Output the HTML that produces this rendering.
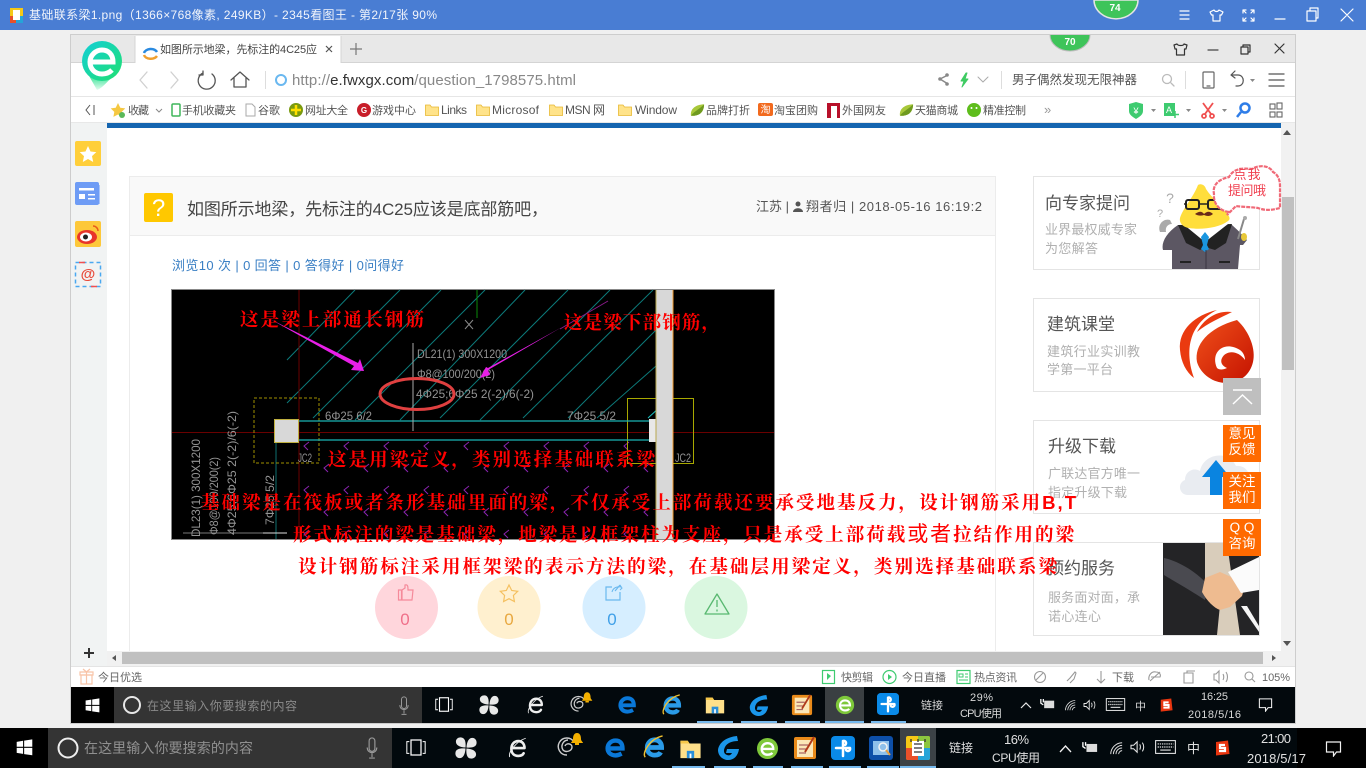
<!DOCTYPE html>
<html lang="zh"><head><meta charset="utf-8"><title>基础联系梁</title>
<style>
html,body{margin:0;padding:0;width:1366px;height:768px;overflow:hidden;background:#f0f0f0}
svg{display:block;font-family:"Liberation Sans","Noto Sans CJK SC",sans-serif;filter:blur(.3px)}
.r{font-family:"Liberation Serif","Noto Serif CJK SC",serif;fill:#f00;font-weight:700;font-size:18.5px}
.cad{fill:#949494;font-size:12px;font-family:"Liberation Sans",sans-serif}
.n{fill:none;stroke-linecap:round;stroke-linejoin:round}
.bk{fill:#555;font-size:11px}.bl{fill:#555;font-size:12px}
</style></head><body>
<svg width="1366" height="768" viewBox="0 0 1366 768" xmlns="http://www.w3.org/2000/svg">
<defs>
<linearGradient id="eg" x1="0" y1="0" x2="1" y2="1"><stop offset="0" stop-color="#12cfd8"/><stop offset="1" stop-color="#20e070"/></linearGradient>
<linearGradient id="tl" x1="0" y1="0" x2="0" y2="1"><stop offset="0" stop-color="#20e08a"/><stop offset="1" stop-color="#e4fcef"/></linearGradient>
<linearGradient id="rd" x1="0" y1="0" x2="1" y2="1"><stop offset="0" stop-color="#f0501a"/><stop offset="1" stop-color="#c41200"/></linearGradient>
<pattern id="chev" patternUnits="userSpaceOnUse" x="300" y="440" width="40" height="44">
<path d="M9 2L4 6L8 10M29 24L24 28L28 32" fill="none" stroke="#8a22b0" stroke-width="1"/></pattern>
<symbol id="win" viewBox="0 0 24 24"><path fill="#fff" d="M1 4l9-1.500V11H1zM11.500 2.300L23 .5V11H11.500zM1 12.500h9V21l-9-1.500zM11.500 12.500H23V23l-11.500-1.700z"/></symbol>
<symbol id="fan" viewBox="0 0 24 24"><path fill="#e8e8e8" d="M11.500 11.500C5 11 1 9 1 5c0-3 3-5 6-4.500 4 .5 5 5 4.500 11zM12.500 11.500C13 5 15 1 19 1c3 0 5 3 4.500 6-.5 4-5 5-11 4.500zM12.500 12.500C19 13 23 15 23 19c0 3-3 5-6 4.500-4-.5-5-5-4.500-11zM11.500 12.500C11 19 9 23 5 23c-3 0-5-3-4.500-6 .5-4 5-5 11-4.500z"/></symbol>
<symbol id="ewhite" viewBox="0 0 24 24"><path class="n" stroke="#eee" stroke-width="3" d="M5 12h15c0-5-3-8-7-8-5 0-8 4-8 9 0 5 3 8 8 8 3 0 5-1 6-3"/><path class="n" stroke="#eee" stroke-width="1" d="M3 22C1 16 12 4 21 1"/></symbol>
<symbol id="swirl" viewBox="0 0 28 24"><path fill="none" stroke="#ccc" stroke-width="1.400" d="M10 22a8.500 8.500 0 1 1 7-13M11 7a6.500 6.500 0 0 0-5 10c3 3 9 1 9-3s-6-4-7-1"/><path fill="#f4b000" d="M20 0c3 0 4 3 4 6 0 2 2 3 2 4H14c0-1 2-2 2-4 0-3 1-6 4-6z"/><rect x="18" y="10" width="4" height="2" fill="#f4b000"/></symbol>
<symbol id="edge" viewBox="0 0 24 24"><path fill="none" stroke="#0a78d8" stroke-width="5" d="M4 13h16c0-6-3-9-8-9-5 0-9 4-9 9 0 5 4 8 9 8 3 0 5-1 7-2"/></symbol>
<symbol id="ie" viewBox="0 0 24 24"><path fill="none" stroke="#2a9be8" stroke-width="5" d="M6 13h15c0-5-3-8-7-8-5 0-8 4-8 8 0 5 3 8 8 8 3 0 5-1 6-3"/><path fill="none" stroke="#f2c230" stroke-width="1.500" d="M4 23C0 20 8 4 22 1"/></symbol>
<symbol id="fold" viewBox="0 0 24 24"><path fill="#ffe08a" d="M1 3h8l2 3h12v16H1z"/><path fill="#f7c84a" d="M1 3h8l2 3H1z"/><path fill="#2a8fd8" d="M8 14h8v8H8z"/><path fill="#fff" d="M11 17h2v5h-2z"/></symbol>
<symbol id="gi" viewBox="0 0 24 24"><path fill="#1a96ea" d="M21 0C11 1 3 6 2 14c0 6 5 10 10 10 6 0 10-4 11-11H11l-1 4h6c-1 2-3 3-5 2-3-1-4-4-2-8 2-4 7-6 13-6z"/></symbol>
<symbol id="note" viewBox="0 0 24 24"><rect x="1" y="1" width="22" height="22" rx="2" fill="#e88a1a"/><rect x="4" y="4" width="16" height="17" fill="#fbe7b8"/><path stroke="#a66" stroke-width="1.300" d="M6 9h9M6 13h8M6 17h7"/><path stroke="#b03a1a" stroke-width="2" d="M21 1L12 16"/></symbol>
<symbol id="gre" viewBox="0 0 24 24"><circle cx="12" cy="12" r="11" fill="#7ec83a"/><path fill="none" stroke="#fff" stroke-width="2.500" d="M6 12.500h12c0-4-2.500-6-6-6s-6 2.500-6 6 2.500 6 6 6c2 0 4-.5 5-2"/></symbol>
<symbol id="blu" viewBox="0 0 24 24"><rect x="0" y="0" width="24" height="24" rx="4" fill="#0a8ae8"/><path class="n" stroke="#fff" stroke-width="2.500" d="M12 5v15M5 12h14M12 5c3-1 4 3 2 4M19 12c1 3-3 4-4 2"/></symbol>
<symbol id="pho" viewBox="0 0 24 24"><rect width="24" height="24" rx="3" fill="#0d4fa8"/><rect x="4" y="5" width="16" height="14" fill="#8fc0ea"/><circle cx="14" cy="11" r="4" fill="none" stroke="#f3f3f3" stroke-width="1.500"/><path d="M17 14l4 5" stroke="#e8a040" stroke-width="2"/></symbol>
<symbol id="kt" viewBox="0 0 24 24"><rect width="24" height="24" rx="2" fill="#f5c816"/><path fill="#8cc63f" d="M12 0h10a2 2 0 0 1 2 2v10H12z"/><path fill="#e8502a" d="M0 12h12v12H2a2 2 0 0 1-2-2z"/><path fill="#25a4d8" d="M12 12h12v10a2 2 0 0 1-2 2H12z"/><rect x="6" y="5" width="12" height="15" fill="#fff"/><path stroke="#333" stroke-width="1.300" d="M8 8h8M8 12h8M8 16h8M5 3v3M19 3v3M12 3v3"/></symbol>
<symbol id="tview" viewBox="0 0 24 20"><rect x="6" y="1" width="12" height="18" fill="none" stroke="#fff" stroke-width="1.500"/><path fill="none" stroke="#fff" stroke-width="1.200" d="M4 3H1v14h3M20 3h3v14h-3"/></symbol>
<symbol id="mic" viewBox="0 0 12 24"><rect x="3" y="1" width="6" height="14" rx="3" fill="none" stroke="#999" stroke-width="1.200"/><path fill="none" stroke="#999" stroke-width="1.200" d="M1 11c0 7 10 7 10 0M6 17v4M3 22h6"/></symbol>
<symbol id="wifi" viewBox="0 0 16 16"><path fill="none" stroke="#ddd" stroke-width="1.100" d="M2 15C2 8 8 2 15 2M5 15c0-5 5-10 10-10M8 15c0-4 3-7 7-7M11 15c0-2 2-4 4-4"/></symbol>
<symbol id="spk" viewBox="0 0 18 16"><path fill="none" stroke="#e8e8e8" stroke-width="1.200" d="M1 6h3l4-4v12l-4-4H1zM11 5c1 2 1 4 0 6M14 3c2 3 2 7 0 10"/></symbol>
<symbol id="kbd" viewBox="0 0 24 16"><rect x=".7" y=".7" width="22.600" height="14.600" fill="none" stroke="#e8e8e8" stroke-width="1.200"/><path stroke="#e8e8e8" stroke-width="1.400" stroke-dasharray="1.500 1" d="M3 4.500h18M3 8h18"/><path stroke="#e8e8e8" stroke-width="1.300" d="M6 11.500h12"/></symbol>
<symbol id="bat" viewBox="0 0 18 14"><rect x="5" y="3" width="12" height="9" fill="#ddd"/><path stroke="#fff" stroke-width="1.500" fill="none" d="M1 1v5l3 2M4 1v4"/></symbol>
<symbol id="sg" viewBox="0 0 16 16"><path fill="#e8350f" d="M2 2l12-1.500L15.500 14 2 15.500z"/><path fill="none" stroke="#fff" stroke-width="2.200" d="M11 5H6v3h5v3H5"/></symbol>
<symbol id="not" viewBox="0 0 16 16"><path fill="none" stroke="#f2f2f2" stroke-width="1.200" d="M1 1h14v10h-4l-3 4v-4H1z"/></symbol>
<symbol id="fd" viewBox="0 0 14 12"><path fill="#ffe38a" stroke="#e8b832" stroke-width=".8" d="M.5 1H5l1.500 2h7v8.500H.5z"/></symbol>
<symbol id="leaf" viewBox="0 0 16 14"><path fill="#a8c83a" d="M1 13C0 6 6 1 15 1c0 8-5 13-14 12z"/><path fill="#6f9a20" d="M1 13C5 8 9 7 15 1c0 8-5 13-14 12z"/></symbol>
</defs>

<!-- outer title bar -->
<rect width="1366" height="30" fill="#497dd3"/>
<rect x="10" y="8" width="13" height="15" fill="#f5c816"/><rect x="10" y="16" width="6" height="7" fill="#e8502a"/><rect x="16" y="16" width="7" height="7" fill="#25a4d8"/><rect x="13" y="10" width="7" height="10" fill="#fff"/>
<text x="29" y="19" font-size="12" fill="#f2f5fb" textLength="408">基础联系梁1.png（1366×768像素, 249KB）- 2345看图王 - 第2/17张 90%</text>
<path d="M1094 0a21 18 0 0 0 44 0z" fill="#3ec45a" stroke="#e4e4e4" stroke-width="1.500"/>
<text x="1115" y="11" font-size="10" font-weight="700" fill="#fff" text-anchor="middle">74</text>
<g class="n" stroke="#fff" stroke-width="1.200">
<path d="M1180 11h9M1180 15h9M1180 19h9"/>
<path d="M1214 10l-4 2 1.500 3h1.500v6h7v-6h1.500l1.500-3-4-2c-1 2-4 2-5 0z"/>
<path d="M1243 10l3 3M1243 10h3M1243 10v3M1254 10l-3 3M1254 10h-3M1254 10v3M1243 21l3-3M1243 21h3M1243 21v-3M1254 21l-3-3M1254 21h-3M1254 21v-3"/>
<path d="M1275 19h10M1307 11h9v10h-9zM1310 11V8h8v10h-2M1341 9l12 12M1353 9l-12 12"/>
</g>

<!-- inner window -->
<rect x="70" y="34" width="1226" height="690" fill="#aaa" opacity=".5"/>
<rect x="71" y="35" width="1224" height="652" fill="#fff"/>
<rect x="71" y="35" width="1224" height="27" fill="#e8e8e8"/>
<rect x="71" y="62" width="1224" height="1" fill="#d4d4d4"/>
<rect x="135" y="36" width="206" height="27" fill="#fff"/>
<path d="M135 36v27M341 36v27" stroke="#d4d4d4"/>
<!-- logo -->
<path d="M88 74L97 90C103 88 108 80 116 74z" fill="url(#tl)"/>
<circle cx="102" cy="61" r="20" fill="url(#eg)"/>
<path d="M91 62h22c0-8-5-12-11-12s-12 5-12 12 5 12 12 12c4 0 7-1 10-4" fill="none" stroke="#fff" stroke-width="5"/>
<!-- tab -->
<path d="M144 53a7 5.500 0 0 1 13-1" fill="none" stroke="#2a8ae0" stroke-width="2.500"/><path d="M144 55a7 5 0 0 0 13 1" fill="none" stroke="#f0a030" stroke-width="2.500"/>
<text x="160" y="53" font-size="11" fill="#444" textLength="157">如图所示地梁，先标注的4C25应</text>
<path d="M326 46l6 6M332 46l-6 6" stroke="#555" stroke-width="1.200"/>
<path d="M356 43v12M350 49h12" stroke="#777" stroke-width="1.200"/>
<path d="M1070 35m-20 0a20 16 0 0 0 40 0z" fill="#3ec45a"/><path d="M1050 35a20 16 0 0 0 40 0" fill="none" stroke="#bbb"/>
<text x="1070" y="45" font-size="10" font-weight="700" fill="#fff" text-anchor="middle">70</text>
<g class="n" stroke="#333" stroke-width="1.200">
<path d="M1177 44l-3 1 1 4h1.500v6h8v-6h1.500l1-4-3-1c-.5 2-6 2-7 0z"/>
<path d="M1208 50h10" stroke="#444"/>
<path d="M1241 47h7v7h-7zM1243 47v-2h7v7h-2"/>
<path d="M1275 44l9 9M1284 44l-9 9"/>
</g>
<!-- nav row -->
<g class="n">
<path d="M147 72l-7 8 7 8M171 72l7 8-7 8" stroke="#d0d0d0" stroke-width="1.300"/>
<path d="M203 73a8.500 8.500 0 1 0 9 1M203 71v4h-4" stroke="#555" stroke-width="1.300"/>
<path d="M231 80l9-8 9 8M234 78v9h12v-9" stroke="#555" stroke-width="1.300"/>
</g>
<rect x="265" y="71" width="1" height="18" fill="#ddd"/>
<circle cx="281" cy="80" r="5" fill="none" stroke="#6ab8f0" stroke-width="2"/>
<text x="292" y="85" font-size="15" fill="#888" textLength="284"><tspan>http://</tspan><tspan fill="#333">e.fwxgx.com</tspan><tspan>/question_1798575.html</tspan></text>
<g class="n">
<path d="M948 75l-8 4 8 5" stroke="#888" stroke-width="1.500"/><circle cx="947" cy="75" r="1.800" fill="#888"/><circle cx="940" cy="79" r="1.800" fill="#888"/><circle cx="947" cy="84" r="1.800" fill="#888"/>
<path d="M966 73l-5 8h3l-2 6 6-8h-3l2-6z" fill="#3ecb62" stroke="#3ecb62"/>
<path d="M978 77l5 5 5-5" stroke="#aaa"/>
<circle cx="1167" cy="79" r="4.500" stroke="#bbb" stroke-width="1.300"/><path d="M1171 83l3 3" stroke="#bbb" stroke-width="1.300"/>
<rect x="1203" y="72" width="11" height="16" rx="1" stroke="#666" stroke-width="1.200"/><path d="M1207 86h3" stroke="#666" stroke-width="1.200"/>
<path d="M1235 71l-4 4 4 3M1231 75h7c7 0 7 11 0 11h-2" stroke="#555" stroke-width="1.200"/>
<path d="M1269 74h15M1269 80h15M1269 86h15" stroke="#555" stroke-width="1.300"/>
</g>
<rect x="1001" y="71" width="1" height="18" fill="#ddd"/><rect x="1185" y="71" width="1" height="18" fill="#ddd"/>
<text x="1012" y="84" font-size="12.500" fill="#555" textLength="125">男子偶然发现无限神器</text>
<path d="M1250 79h5l-2.500 3z" fill="#888"/>
<rect x="71" y="96" width="1224" height="1" fill="#e6e6e6"/>
<!-- bookmarks -->
<path d="M90 105l-4 5 4 5M94 105v10" fill="none" stroke="#555"/>
<path d="M118 103l2.300 4.700 5 .7-3.600 3.500.9 5-4.600-2.400-4.600 2.400.9-5-3.600-3.500 5-.7z" fill="#f5c842"/><circle cx="122" cy="115" r="3" fill="#5ab85a"/>
<text class="bk" x="128" y="114" textLength="21">收藏</text><path d="M156 109l3 3 3-3" fill="none" stroke="#888"/>
<rect x="172" y="104" width="8" height="12" rx="1" fill="none" stroke="#3eb55a" stroke-width="1.500"/>
<text class="bk" x="182" y="114" textLength="54">手机收藏夹</text>
<path d="M246 104h6l3 3v9h-9z" fill="#fff" stroke="#aaa"/>
<text class="bk" x="258" y="114" textLength="22">谷歌</text>
<circle cx="296" cy="110" r="7" fill="#7a9a10"/><path d="M296 105v10M291 110h10" stroke="#ffe000" stroke-width="2.500"/>
<text class="bk" x="305" y="114" textLength="43">网址大全</text>
<circle cx="364" cy="110" r="7" fill="#c81e2a"/><text x="364" y="113" font-size="8" font-weight="700" fill="#fff" text-anchor="middle">G</text>
<text class="bk" x="372" y="114" textLength="44">游戏中心</text>
<use href="#fd" x="425" y="104" width="14" height="12"/><text class="bl" x="441" y="114" textLength="26">Links</text>
<use href="#fd" x="476" y="104" width="14" height="12"/><text class="bl" x="492" y="114" textLength="47">Microsof</text>
<use href="#fd" x="549" y="104" width="14" height="12"/><text class="bl" x="565" y="114" textLength="40">MSN 网</text>
<use href="#fd" x="618" y="104" width="14" height="12"/><text class="bl" x="635" y="114" textLength="42">Window</text>
<use href="#leaf" x="690" y="103" width="15" height="14"/><text class="bk" x="706" y="114" textLength="44">品牌打折</text>
<rect x="758" y="103" width="15" height="13" rx="2" fill="#f26a1e"/><text x="765.500" y="113" font-size="10" fill="#fff" text-anchor="middle">淘</text>
<text class="bk" x="774" y="114" textLength="44">淘宝团购</text>
<path d="M827 103h13v15h-3v-12h-6v12h-4z" fill="#b8102a"/>
<text class="bk" x="842" y="114" textLength="44">外国网友</text>
<use href="#leaf" x="899" y="103" width="15" height="14"/><text class="bk" x="915" y="114" textLength="43">天猫商城</text>
<circle cx="974" cy="110" r="7" fill="#5ebd1c"/><circle cx="971.500" cy="108" r="1" fill="#fff"/><circle cx="976.500" cy="108" r="1" fill="#fff"/>
<text class="bk" x="983" y="114" textLength="43">精准控制</text>
<text x="1044" y="114" font-size="13" fill="#999">»</text>
<path d="M1129 104l7-2 7 2v7c0 4-4 6-7 8-3-2-7-4-7-8z" fill="#3ecb70"/><text x="1136" y="114" font-size="9" fill="#fff" text-anchor="middle">¥</text>
<rect x="1164" y="103" width="11" height="13" fill="#3ecb70"/><text x="1169" y="113" font-size="9" fill="#fff" text-anchor="middle">A</text><path d="M1175 111v7M1172 114.500h7" stroke="#3ecb70" stroke-width="1.500"/>
<g fill="none" stroke="#f05050" stroke-width="1.800"><path d="M1203 103l8 11M1213 103l-8 11"/><circle cx="1204" cy="116" r="2"/><circle cx="1212" cy="116" r="2"/></g>
<circle cx="1245" cy="108" r="4.500" fill="none" stroke="#2e7de8" stroke-width="2.500"/><path d="M1241 112l-4 5" stroke="#2e7de8" stroke-width="2.500"/>
<path d="M1151 109h5l-2.500 3zM1186 109h5l-2.500 3zM1222 109h5l-2.500 3z" fill="#888"/>
<g fill="none" stroke="#666" stroke-width="1.100"><rect x="1270" y="104" width="5" height="5"/><rect x="1277" y="103" width="5" height="6" /><rect x="1270" y="112" width="5" height="5"/><rect x="1277" y="112" width="5" height="5"/></g>
<rect x="71" y="122" width="1224" height="1" fill="#e8e8e8"/>

<!-- page -->
<rect x="71" y="123" width="36" height="543" fill="#f1f3f3"/>
<rect x="107" y="123" width="1174" height="5" fill="#1565b0"/>
<rect x="1281" y="123" width="14" height="528" fill="#f1f1f1"/>
<rect x="1282" y="197" width="12" height="173" fill="#c0c0c0"/>
<path d="M1283 641h8l-4 5z" fill="#555"/><path d="M1283 135h8l-4-5z" fill="#555"/>
<rect x="75" y="141" width="26" height="25" rx="2" fill="#ffcf3a"/>
<path d="M88 146l2.500 5.500 5.800.6-4.300 4 1.200 5.900-5.200-3-5.200 3 1.200-5.900-4.300-4 5.800-.6z" fill="#fff"/>
<rect x="96" y="185" width="4" height="19" fill="#a8c4fa"/><rect x="75" y="182" width="24" height="23" rx="2" fill="#6e9cf5"/><path d="M79 188h15v2.500H79zM79 194h6v5h-6zM88 194h7v1.500h-7zM88 198h7v1.500h-7z" fill="#fff"/>
<rect x="75" y="221" width="26" height="26" rx="2" fill="#fdc83a"/><ellipse cx="87" cy="237" rx="10" ry="7" fill="#e8352a"/><ellipse cx="86" cy="237" rx="6" ry="4.500" fill="#fff"/><circle cx="85.500" cy="237" r="2.500" fill="#222"/><path d="M93 226a5 5 0 0 1 5 5" fill="none" stroke="#e85a1a" stroke-width="1.500"/>
<rect x="75.500" y="262.500" width="25" height="24" fill="none" stroke="#4aa8f0" stroke-width="1.500" stroke-dasharray="4 3"/><path d="M79 262.500h6M91 286.500h6" stroke="#f05050" stroke-width="1.500"/><text x="88" y="279" font-size="15" font-weight="700" fill="#e84a3a" text-anchor="middle">@</text>

<!-- main card -->
<rect x="129.500" y="176.500" width="866" height="480" fill="#fff" stroke="#ececec"/>
<rect x="130" y="177" width="865" height="58" fill="#f9f9f9"/>
<rect x="130" y="235" width="865" height="1" fill="#ececec"/>
<rect x="144" y="193" width="29" height="29" rx="2" fill="#ffc800"/>
<text x="158.500" y="216" font-size="24" fill="#fff" text-anchor="middle">?</text>
<text x="187" y="215" font-size="17" fill="#444" textLength="361">如图所示地梁，先标注的4C25应该是底部筋吧，</text>
<text x="756" y="211" font-size="13" fill="#555">江苏 |</text>
<circle cx="798" cy="204" r="2.500" fill="#555"/><path d="M793 212c0-5 10-5 10 0z" fill="#555"/>
<text x="806" y="211" font-size="13" fill="#555" textLength="176">翔者归 | 2018-05-16 16:19:2</text>
<text x="172" y="270" font-size="13" fill="#3a7fc4" textLength="232">浏览10 次 | 0 回答 | 0 答得好 | 0问得好</text>

<!-- CAD picture -->
<rect x="171.500" y="289.500" width="603" height="250" fill="#000" stroke="#888"/>
<g stroke="#0c7a7a" stroke-width="1" fill="none">
<path d="M287 360L355 290M287 403L400 290M313 418L441 290M355 420L485 290M400 420L525 290M440 418L568 290M480 420L610 290M523 418L653 290M568 418L656 330M597 418L656 366"/>
</g>
<path d="M648 418L660 407" stroke="#1ac0c0"/>
<rect x="300" y="441" width="355" height="98" fill="url(#chev)"/>
<path d="M299 290v249" stroke="#6a0000"/><path d="M172 432.500h602" stroke="#6a0000"/>
<path d="M477 290v28" stroke="#0a8a0a"/>
<path d="M276 442v97" stroke="#0e7070"/>
<path d="M183 533h80" stroke="#777"/><path d="M263 533h24" stroke="#ddd"/>
<rect x="254" y="398" width="65" height="65" fill="none" stroke="#a09000" stroke-dasharray="3 2"/>
<rect x="627.500" y="398.500" width="66" height="65" fill="none" stroke="#a8a800"/>
<path d="M299 421h351M299 440h351" stroke="#19b5b5" stroke-width="1.200"/>
<rect x="274.500" y="419.500" width="24" height="23" fill="#d8d8d8" stroke="#c0b040"/>
<rect x="649" y="419" width="7" height="23" fill="#e8e8e8"/>
<rect x="656" y="290" width="17" height="249" fill="#d8d8d8"/>
<path d="M656 290v249" stroke="#b8a850"/><path d="M673 290v249" stroke="#f09a30"/>
<path d="M413 343v88" stroke="#aaa"/>
<path d="M465 320l8 9M473 320l-8 9" stroke="#888"/>
<text class="cad" x="417" y="358" textLength="90" lengthAdjust="spacingAndGlyphs">DL21(1) 300X1200</text>
<text class="cad" x="417" y="378" textLength="78" lengthAdjust="spacingAndGlyphs">Φ8@100/200(2)</text>
<text class="cad" x="416" y="398" textLength="118" lengthAdjust="spacingAndGlyphs">4Φ25;6Φ25 2(-2)/6(-2)</text>
<text class="cad" x="325" y="420" textLength="47" lengthAdjust="spacingAndGlyphs">6Φ25 6/2</text>
<text class="cad" x="567" y="420" textLength="49" lengthAdjust="spacingAndGlyphs">7Φ25 5/2</text>
<text class="cad" x="298" y="462" textLength="14" lengthAdjust="spacingAndGlyphs">JC2</text>
<text class="cad" x="675" y="462" textLength="16" lengthAdjust="spacingAndGlyphs">JC2</text>
<text class="cad" transform="translate(200 537) rotate(-90)" textLength="98" lengthAdjust="spacingAndGlyphs">DL23(1) 300X1200</text>
<text class="cad" transform="translate(218 535) rotate(-90)" textLength="78" lengthAdjust="spacingAndGlyphs">Φ8@100/200(2)</text>
<text class="cad" transform="translate(236 535) rotate(-90)" textLength="124" lengthAdjust="spacingAndGlyphs">4Φ25;6Φ25 2(-2)/6(-2)</text>
<text class="cad" transform="translate(274 525) rotate(-90)" textLength="50" lengthAdjust="spacingAndGlyphs">7Φ25 5/2</text>
<ellipse cx="417" cy="394" rx="37" ry="15.500" fill="none" stroke="#e04040" stroke-width="3"/>
<path d="M270 319L358 363L360 359L364 371L351 370L354 366z" fill="#e81fe8"/>
<path d="M608 301L560 329" stroke="#8a1a8a"/>
<path d="M562 327L488 370L490 375L480 378L486 367L488 368z" fill="#e81fe8"/>

<!-- rating circles -->
<circle cx="406.500" cy="607.500" r="31.500" fill="#ffd6dc"/><circle cx="509" cy="607.500" r="31.500" fill="#fff0cf"/><circle cx="614" cy="607.500" r="31.500" fill="#d6eeff"/><circle cx="716" cy="607.500" r="31.500" fill="#daf7e0"/>
<path d="M398.500 590h3v10h-3zM402 590l3-2v-3c3-1 3 2 3 5h5l-1 10h-10z" fill="none" stroke="#f58a9a" stroke-width="1.200"/>
<path d="M509 585l2.700 5.500 6 .8-4.300 4.200 1 6-5.400-2.800-5.400 2.800 1-6-4.300-4.200 6-.8z" fill="none" stroke="#f5c060" stroke-width="1.200"/>
<path d="M612 587h-6v13h14v-8M606 587h4M620 585l-5 6" fill="none" stroke="#6ab8ee" stroke-width="1.200"/><path d="M612 592c1-4 5-6 9-5l-1-2 2 3-2 2" fill="none" stroke="#6ab8ee"/>
<path d="M717 594L729 614H705z" fill="none" stroke="#58b870" stroke-width="1.300" stroke-linejoin="round"/><path d="M717 600v7M717 609.500v2" stroke="#58b870" stroke-width="1.300"/>
<text x="405" y="625" font-size="17" fill="#f0708a" text-anchor="middle">0</text>
<text x="509" y="625" font-size="17" fill="#e8a840" text-anchor="middle">0</text>
<text x="612" y="625" font-size="17" fill="#40a0e8" text-anchor="middle">0</text>

<!-- right cards -->
<g fill="#fff" stroke="#e4e4e4"><rect x="1033.500" y="176.500" width="226" height="93"/><rect x="1033.500" y="298.500" width="226" height="93"/><rect x="1033.500" y="420.500" width="226" height="93"/><rect x="1033.500" y="542.500" width="226" height="93"/></g>
<g font-size="17" fill="#555">
<text x="1045" y="209" textLength="85">向专家提问</text><text x="1047" y="330" textLength="68">建筑课堂</text><text x="1048" y="452" textLength="68">升级下载</text><text x="1047" y="574" textLength="68">预约服务</text></g>
<g font-size="13" fill="#b0b0b0">
<text x="1045" y="234" textLength="92">业界最权威专家</text><text x="1045" y="253" textLength="53">为您解答</text>
<text x="1047" y="356" textLength="93">建筑行业实训教</text><text x="1047" y="374" textLength="66">学第一平台</text>
<text x="1048" y="478" textLength="92">广联达官方唯一</text><text x="1048" y="497" textLength="79">指定升级下载</text>
<text x="1048" y="602" textLength="92">服务面对面，承</text><text x="1048" y="621" textLength="53">诺心连心</text></g>
<!-- mascot -->
<path d="M1160 232c-3-8 4-14 10-12l2 4c-4 0-7 3-6 8z" fill="#aaa"/>
<text x="1170" y="203" font-size="14" fill="#aaa" text-anchor="middle">?</text><text x="1160" y="217" font-size="11" fill="#aaa" text-anchor="middle">?</text>
<path d="M1172 269V250L1163 250C1161 243 1166 233 1178 225L1232 225C1240 232 1245 238 1247 240L1243 245L1240 245L1238 269z" fill="#5c5763"/>
<path d="M1178 225L1186 243L1200 250L1205 247L1215 250L1226 243L1232 224z" fill="#222"/>
<path d="M1183 224L1205 242L1228 224z" fill="#fff"/>
<path d="M1198 185c3-2 7 0 8 4 5 8 14 15 21 24 2 3 4 6 1 8-9 7-27 9-39 7-7-1-10-6-9-10 3-10 13-20 18-33z" fill="#ffde3c"/>
<path d="M1205 232l4 5-2 8 2 4-4 3-4-3 2-4-2-8z" fill="#1a96e0"/>
<rect x="1186" y="200" width="13" height="9" rx="2" fill="none" stroke="#222" stroke-width="2"/><rect x="1208" y="200" width="13" height="9" rx="2" fill="none" stroke="#222" stroke-width="2"/><path d="M1199 204h9M1186 204l-2 0M1221 204l8-1" stroke="#222" stroke-width="1.500"/>
<path d="M1195 214c4-3 7-3 9 0 3-3 6-3 9 0-4 3-6 2-9 1-3 1-6 1-9-1z" fill="#6a2a18"/>
<path d="M1180 262h11M1219 262h11" stroke="#222" stroke-width="2"/><path d="M1206 250v19" stroke="#3a3640"/>
<path d="M1244 219l-6 20" stroke="#888" stroke-width="2"/><circle cx="1245" cy="218" r="2" fill="#aaa"/><ellipse cx="1244" cy="237" rx="3" ry="4" fill="#e8c838"/>
<path d="M1229 212c-9-1-16-8-15-18-2-10 6-15 15-17 5-9 14-9 23-8 8-5 18-3 21 3 6 3 7 10 7 14v22c-8 2-14 3-22 0-7-1-16-1-22-2l-9 9z" fill="#fff" stroke="#f06a78" stroke-width="2.200" stroke-dasharray="4 1"/>
<text x="1247" y="179" font-size="13" fill="#f04050" text-anchor="middle" textLength="27">点我</text>
<text x="1247" y="195" font-size="13" fill="#f04050" text-anchor="middle" textLength="38">提问哦</text>
<!-- swirl logo -->
<path d="M1237 320C1250 332 1256 350 1253 362C1250 375 1240 383 1225 383C1210 382 1200 372 1197 362C1194 345 1208 328 1237 320z" fill="url(#rd)"/>
<path d="M1217 368C1210 352 1224 340 1240 350C1243 352 1245 356 1245 360C1238 350 1226 350 1222 358C1220 362 1222 366 1227 368C1223 370 1219 370 1217 368z" fill="#fff"/>
<path d="M1217 310C1195 315 1178 330 1180 350C1181 362 1186 372 1194 378C1189 365 1188 350 1191 340C1195 325 1205 316 1217 310z" fill="#ea3a10"/>
<path d="M1232 312C1218 310 1204 318 1197 332C1208 323 1220 318 1232 312z" fill="#ea3a10"/>
<!-- cloud -->
<path d="M1188 495c-9 0-11-12-3-15 0-9 9-13 15-9 3-17 28-22 36-5 10-1 15 8 13 15v14z" fill="#e9ecf1"/>
<path d="M1216 460l14 17h-8v18h-12v-18h-8z" fill="#0a84e0"/>
<!-- handshake -->
<rect x="1163" y="543" width="96" height="92" fill="#242426"/>
<path d="M1164 558C1175 560 1195 570 1208 585L1205 600C1190 590 1172 580 1164 575z" fill="#4a4a50"/>
<path d="M1205 543H1227L1240 635H1217L1220 605L1205 590z" fill="#d9cdbb"/>
<path d="M1205 578l15-6 18 8 6 9-2 7-12 11-10 3c-6-2-13-9-18-18z" fill="#eebb90"/>
<path d="M1228 572L1259 557V590L1241 593z" fill="#fbfbfb"/>
<path d="M1241 606L1259 632V626L1247 606z" fill="#f4f4f4"/>

<!-- red overlay text -->
<text class="r" x="240" y="326" textLength="184">这是梁上部通长钢筋</text>
<text class="r" x="564" y="329" textLength="156">这是梁下部钢筋，</text>
<text class="r" x="328" y="466" textLength="327">这是用梁定义，类别选择基础联系梁</text>
<text class="r" x="201" y="509" textLength="875">基础梁是在筏板或者条形基础里面的梁，不仅承受上部荷载还要承受地基反力，设计钢筋采用<tspan font-family="Liberation Sans">B,T</tspan></text>
<text class="r" x="293" y="541" textLength="781">形式标注的梁是基础梁，地梁是以框架柱为支座，只是承受上部荷载<tspan style="font-size:21px;font-weight:400;font-family:'Noto Sans CJK SC',sans-serif">或者</tspan>拉结作用的梁</text>
<text class="r" x="298" y="573" textLength="759">设计钢筋标注采用框架梁的表示方法的梁，在基础层用梁定义，类别选择基础联系梁</text>

<!-- float buttons -->
<rect x="1223" y="378" width="38" height="37" fill="#bfbfbf"/><path d="M1233 390h19M1233 404l9.500-9 9.500 9" fill="none" stroke="#fff" stroke-width="1.500"/>
<rect x="1223" y="425" width="38" height="37" fill="#ff6a00"/><rect x="1223" y="472" width="38" height="37" fill="#ff6a00"/><rect x="1223" y="519" width="38" height="37" fill="#ff6a00"/>
<g font-size="13.500" fill="#fff" text-anchor="middle">
<text x="1242" y="438">意见</text><text x="1242" y="454">反馈</text><text x="1242" y="486">关注</text><text x="1242" y="502">我们</text><text x="1242" y="532">Q Q</text><text x="1242" y="548">咨询</text></g>

<!-- h scroll + status -->
<rect x="107" y="651" width="1188" height="15" fill="#f1f1f1"/>
<rect x="122" y="652" width="1141" height="12" fill="#c0c0c0"/>
<path d="M116 655v6l-4-3zM1272 655v6l4-3z" fill="#555"/>
<path d="M89 648v10M84 653h10" stroke="#333" stroke-width="2"/>
<rect x="71" y="666" width="1224" height="21" fill="#fff"/>
<rect x="71" y="666" width="1224" height="1" fill="#e4e4e4"/>
<g fill="none" stroke="#f8c4a8" stroke-width="1.200"><rect x="81" y="675" width="11" height="9"/><path d="M80 672h13v3H80zM86.500 672v12M83 669l3.500 3 3.500-3"/></g>
<g font-size="11" fill="#666"><text x="98" y="681" textLength="44">今日优选</text>
<text x="841" y="681" textLength="32">快剪辑</text><text x="902" y="681" textLength="44">今日直播</text><text x="974" y="681" textLength="43">热点资讯</text><text x="1112" y="681" textLength="22">下载</text><text x="1262" y="681" textLength="28">105%</text></g>
<g fill="none" stroke="#3ecb70" stroke-width="1.200"><rect x="822.500" y="670.500" width="12" height="13"/><circle cx="889.500" cy="677" r="6.500"/><rect x="957" y="670.500" width="13" height="13"/></g>
<path d="M827 673l4 3-4 4zM888 674l4 3-4 3z" fill="#3ecb70"/><path d="M959 674h4v3h-4zM965 674h3M965 677h3M959 680h9" stroke="#3ecb70" fill="none"/>
<g fill="none" stroke="#999" stroke-width="1.100"><circle cx="1040" cy="677" r="5.500"/><path d="M1036 680l7-7M1067 681l3-3 5-6 1 1-2 6-4 4M1101 671v12M1097 679l4 4 4-4M1149 680c-1-5 3-9 7-8 4 0 5 3 4 5h-9M1150 681l10-9M1184 673h9v10h-9zM1187 673v-2h8M1214 674h2l3-3v12l-3-3h-2zM1223 674c1 2 1 4 0 6M1226 672c2 3 2 7 0 10"/><circle cx="1249" cy="676" r="4"/><path d="M1252 679l3 3"/></g>

<!-- inner taskbar -->
<rect x="71" y="687" width="1224" height="36" fill="#03090d"/>
<rect x="71" y="687" width="43" height="36" fill="#000"/><rect x="114" y="687" width="308" height="36" fill="#343434"/>
<use href="#win" x="85" y="698" width="15" height="15"/>
<circle cx="132" cy="705" r="8" fill="none" stroke="#e6e6e6" stroke-width="2"/>
<text x="147" y="710" font-size="12" fill="#8a8a8a" textLength="150">在这里输入你要搜索的内容</text>
<use href="#mic" x="399" y="696" width="10" height="20"/>
<use href="#tview" x="435" y="697" width="18" height="15"/>
<use href="#fan" x="479" y="695" width="20" height="20"/><use href="#ewhite" x="526" y="695" width="19" height="20"/><use href="#swirl" x="570" y="692" width="24" height="21"/><use href="#edge" x="618" y="695" width="19" height="19"/><use href="#ie" x="660" y="694" width="22" height="21"/>
<use href="#fold" x="705" y="695" width="20" height="20"/><use href="#gi" x="748" y="695" width="21" height="21"/><use href="#note" x="791" y="694" width="22" height="22"/>
<rect x="825" y="687" width="39" height="36" fill="#3a3f42"/>
<use href="#gre" x="835" y="695" width="20" height="20"/><use href="#blu" x="877" y="693" width="22" height="22"/>
<path d="M697 722h36M741 722h36M785 722h35M825 722h39M871 722h35" stroke="#76b9ed" stroke-width="2"/>
<g font-size="11" fill="#d8d8d8"><text x="921" y="709" textLength="22">链接</text><text x="970" y="701" textLength="23">29%</text><text x="960" y="717" textLength="42">CPU使用</text><text x="1135" y="710" textLength="11">中</text><text x="1201" y="700" textLength="27">16:25</text><text x="1188" y="718" textLength="53">2018/5/16</text></g>
<path d="M1021 708l5-5 5 5" fill="none" stroke="#e8e8e8" stroke-width="1.200"/>
<use href="#bat" x="1040" y="698" width="15" height="12"/><use href="#wifi" x="1064" y="699" width="12" height="12"/><use href="#spk" x="1083" y="699" width="14" height="12"/><use href="#kbd" x="1105" y="698" width="21" height="13"/><use href="#sg" x="1159" y="698" width="14" height="14"/><use href="#not" x="1258" y="698" width="15" height="14"/>

<!-- outer taskbar -->
<rect y="728" width="1366" height="40" fill="#02090d"/>
<rect width="48" y="728" height="40" fill="#000"/><rect x="48" y="728" width="344" height="40" fill="#343434"/>
<rect x="1297" y="728" width="69" height="40" fill="#000"/>
<use href="#win" x="16" y="739" width="17" height="17"/>
<circle cx="68" cy="748" r="9.500" fill="none" stroke="#eee" stroke-width="2"/>
<text x="84" y="753" font-size="14" fill="#909090" textLength="169">在这里输入你要搜索的内容</text>
<use href="#mic" x="366" y="737" width="12" height="23"/>
<use href="#tview" x="406" y="739" width="20" height="17"/>
<use href="#fan" x="455" y="737" width="22" height="22"/><use href="#ewhite" x="507" y="737" width="21" height="22"/><use href="#swirl" x="557" y="733" width="28" height="24"/><use href="#edge" x="605" y="737" width="21" height="21"/><use href="#ie" x="641" y="735" width="24" height="23"/>
<use href="#fold" x="679" y="738" width="23" height="22"/><use href="#gi" x="716" y="736" width="24" height="24"/><use href="#gre" x="756" y="737" width="23" height="23"/><use href="#note" x="793" y="736" width="24" height="24"/><use href="#blu" x="831" y="736" width="24" height="24"/>
<rect x="900" y="728" width="36" height="40" fill="#3c4246"/>
<use href="#pho" x="869" y="736" width="24" height="24"/><use href="#kt" x="906" y="736" width="24" height="24"/>
<path d="M672 767h33M714 767h32M753 767h30M791 767h32M829 767h32M867 767h32M900 767h36" stroke="#76b9ed" stroke-width="2"/>
<g fill="#e0e0e0"><text x="949" y="752" font-size="12" textLength="24">链接</text><text x="1004" y="744" font-size="13" textLength="25">16%</text><text x="992" y="762" font-size="12" textLength="48">CPU使用</text><text x="1187" y="753" font-size="13" textLength="13">中</text><text x="1261" y="743" font-size="13" textLength="30">21:00</text><text x="1247" y="763" font-size="13" textLength="59">2018/5/17</text></g>
<path d="M1060 752l5.500-6 5.500 6" fill="none" stroke="#f0f0f0" stroke-width="1.300"/>
<use href="#bat" x="1082" y="741" width="16" height="13"/><use href="#wifi" x="1109" y="741" width="14" height="14"/><use href="#spk" x="1130" y="740" width="16" height="14"/><use href="#kbd" x="1154" y="740" width="23" height="14"/><use href="#sg" x="1214" y="740" width="16" height="16"/><use href="#not" x="1325" y="741" width="17" height="16"/>
</svg>
</body></html>
